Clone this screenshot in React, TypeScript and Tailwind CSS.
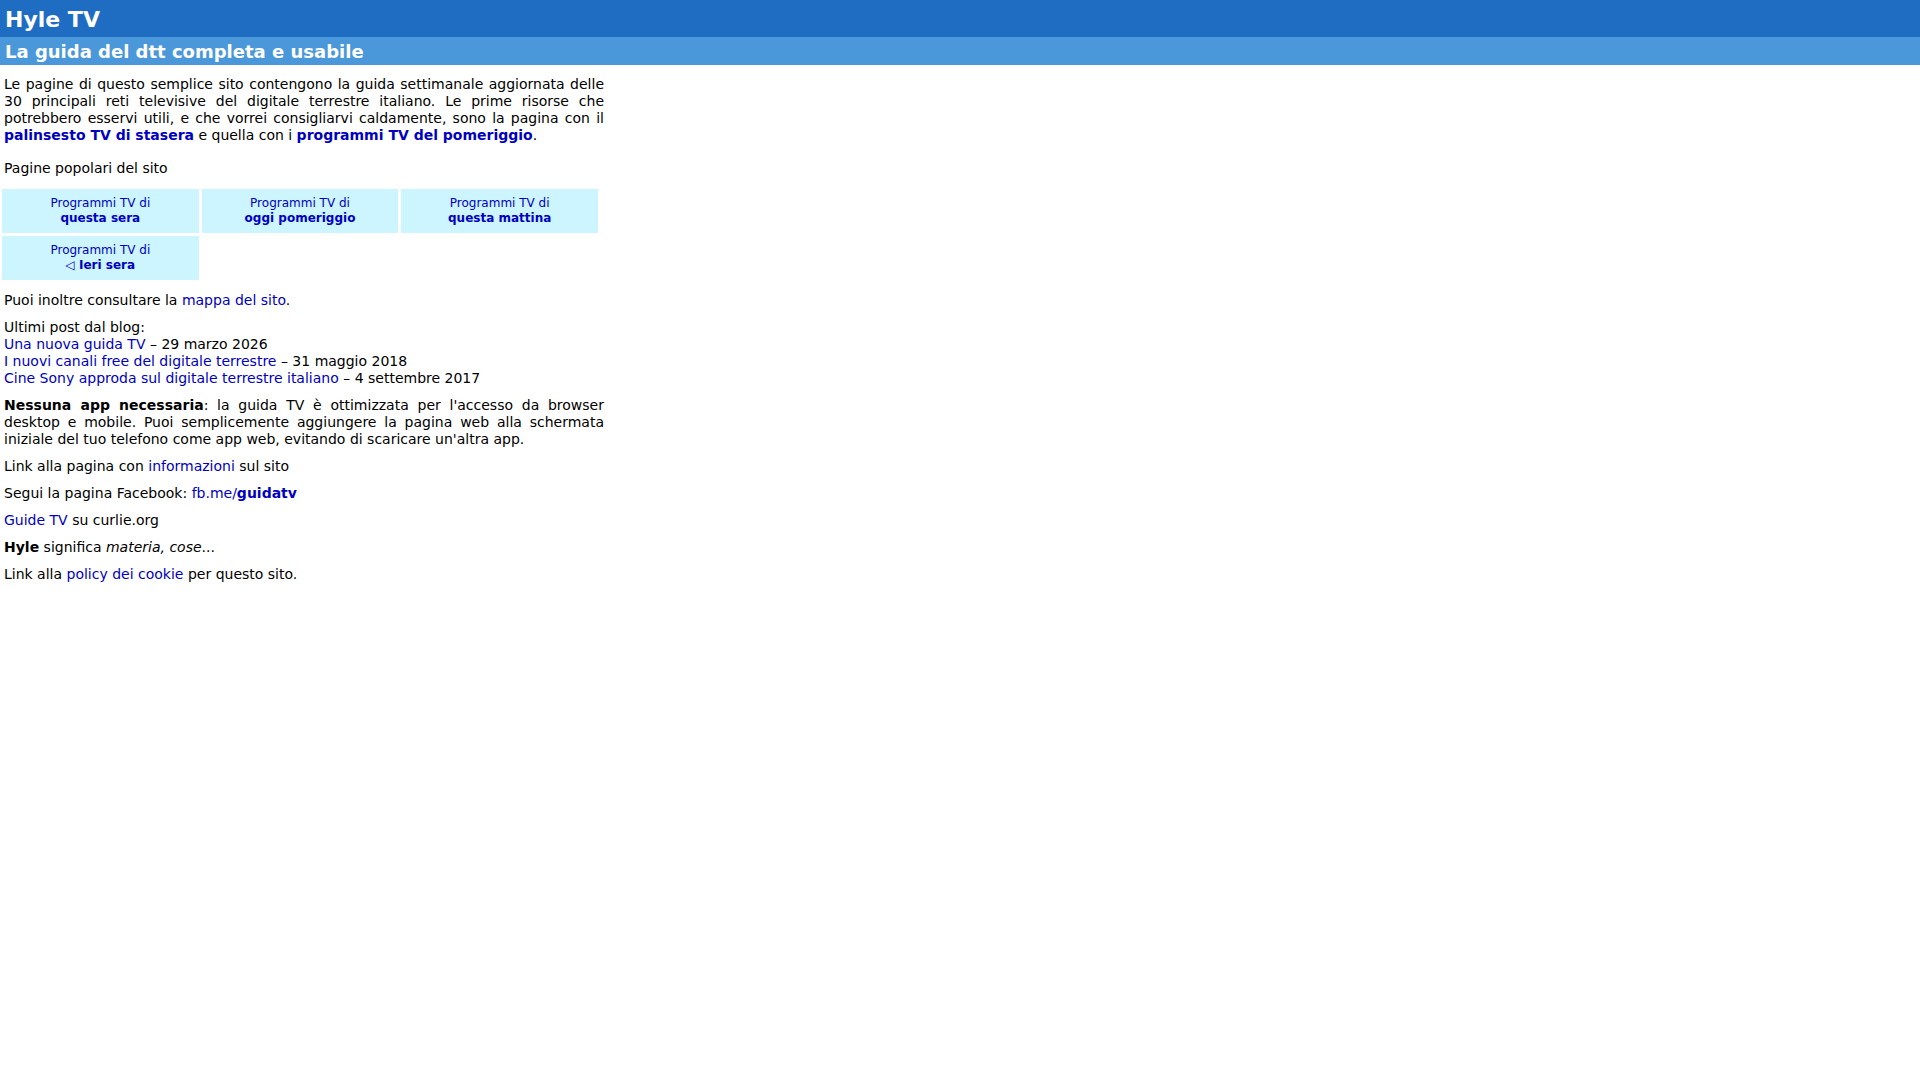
import React from "react";

const L = ({ children, bold = false }: { children: React.ReactNode; bold?: boolean }) => (
  <a href="#" className={`text-[#0000c0] no-underline ${bold ? "font-bold" : ""}`}>
    {children}
  </a>
);

const Cell = ({ label }: { label: string }) => (
  <a
    href="#"
    className="flex h-[44px] flex-col items-center justify-center bg-[#ccf5ff] text-[12px] leading-[15px] text-[#0000c0] no-underline"
  >
    <span>Programmi TV di</span>
    <span className="font-bold">{label}</span>
  </a>
);

export default function App() {
  return (
    <div
      className="min-h-screen bg-white text-black"
      style={{ fontFamily: '"DejaVu Sans", Verdana, sans-serif' }}
    >
      <div className="flex h-[37px] items-center bg-[#1f6dc2] px-[5px] pt-[2px] text-[22px] font-bold leading-[26px] text-white">
        Hyle TV
      </div>
      <div className="flex h-[28px] items-center bg-[#4a98da] px-[5px] pt-[2px] text-[18px] font-bold leading-[22px] text-white">
        La guida del dtt completa e usabile
      </div>
      <div className="ml-[4px] w-[600px] text-[14px] leading-[17px]">
        <p className="mt-[11px] text-justify">
          Le pagine di questo semplice sito contengono la guida settimanale aggiornata delle 30
          principali reti televisive del digitale terrestre italiano. Le prime risorse che
          potrebbero esservi utili, e che vorrei consigliarvi caldamente, sono la pagina con il{" "}
          <L bold>palinsesto TV di stasera</L> e quella con i <L bold>programmi TV del pomeriggio</L>.
        </p>
        <p className="mt-[16px]">Pagine popolari del sito</p>
      </div>
      <div className="ml-[2px] mt-[12px] grid w-[596px] grid-cols-3 gap-[3px]">
        <Cell label="questa sera" />
        <Cell label="oggi pomeriggio" />
        <Cell label="questa mattina" />
        <Cell label="◁ Ieri sera" />
      </div>
      <div className="ml-[4px] w-[600px] text-[14px] leading-[17px]">
        <p className="mt-[12px]">
          Puoi inoltre consultare la <L>mappa del sito</L>.
        </p>
        <p className="mt-[10px]">
          Ultimi post dal blog:
          <br />
          <L>Una nuova guida TV</L> – 29 marzo 2026
          <br />
          <L>I nuovi canali free del digitale terrestre</L> – 31 maggio 2018
          <br />
          <L>Cine Sony approda sul digitale terrestre italiano</L> – 4 settembre 2017
        </p>
        <p className="mt-[10px] text-justify">
          <b>Nessuna app necessaria</b>: la guida TV è ottimizzata per l'accesso da browser desktop e
          mobile. Puoi semplicemente aggiungere la pagina web alla schermata iniziale del tuo
          telefono come app web, evitando di scaricare un'altra app.
        </p>
        <p className="mt-[10px]">
          Link alla pagina con <L>informazioni</L> sul sito
        </p>
        <p className="mt-[10px]">
          Segui la pagina Facebook:{" "}
          <a href="#" className="text-[#0000c0] no-underline">
            fb.me/<b>guidatv</b>
          </a>
        </p>
        <p className="mt-[10px]">
          <L>Guide TV</L> su curlie.org
        </p>
        <p className="mt-[10px]">
          <b>Hyle</b> significa <i>materia, cose</i>...
        </p>
        <p className="mt-[10px]">
          Link alla <L>policy dei cookie</L> per questo sito.
        </p>
      </div>
    </div>
  );
}
